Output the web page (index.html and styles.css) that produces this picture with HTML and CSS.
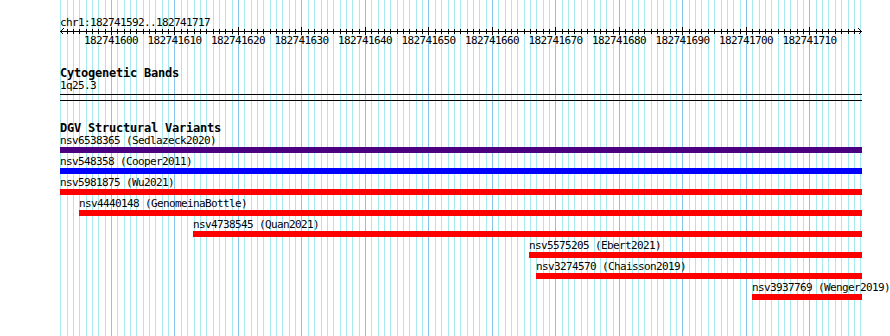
FILE: index.html
```html
<!DOCTYPE html>
<html>
<head>
<meta charset="utf-8">
<title>DGV Structural Variants</title>
<link rel="stylesheet" href="styles.css">
</head>
<body>
<div class="browser">
  <svg class="grid" id="grid" width="890" height="336" shape-rendering="crispEdges"></svg>
  <div class="panel">
    <svg class="ruler" id="ruler" width="890" height="46" shape-rendering="crispEdges">
      <text class="chr" x="60" y="26">chr1:182741592..182741717</text>
      <path class="axis" d="M60 31.5H861.5M60.5 31.5L63.5 28.5M60.5 31.5L63.5 34.5M861.5 31.5L858.5 28.5M861.5 31.5L858.5 34.5"/>
      <g class="tick-labels">
        <text x="111" y="44">182741600</text>
        <text x="174.5" y="44">182741610</text>
        <text x="238" y="44">182741620</text>
        <text x="301.5" y="44">182741630</text>
        <text x="365" y="44">182741640</text>
        <text x="428.5" y="44">182741650</text>
        <text x="492" y="44">182741660</text>
        <text x="555.5" y="44">182741670</text>
        <text x="619" y="44">182741680</text>
        <text x="682.5" y="44">182741690</text>
        <text x="746" y="44">182741700</text>
        <text x="809.5" y="44">182741710</text>
      </g>
    </svg>

    <section class="track track-cyto">
      <h2 class="track-title">Cytogenetic Bands</h2>
      <div class="band-label">1q25.3</div>
      <div class="band"></div>
    </section>

    <section class="track track-dgv">
      <h2 class="track-title">DGV Structural Variants</h2>
      <div class="feature" style="margin-left:60px;width:802px">
        <div class="feature-label">nsv6538365 (Sedlazeck2020)</div>
        <div class="feature-bar bar-indigo"></div>
      </div>
      <div class="feature" style="margin-left:60px;width:802px">
        <div class="feature-label">nsv548358 (Cooper2011)</div>
        <div class="feature-bar bar-blue"></div>
      </div>
      <div class="feature" style="margin-left:60px;width:802px">
        <div class="feature-label">nsv5981875 (Wu2021)</div>
        <div class="feature-bar bar-red"></div>
      </div>
      <div class="feature" style="margin-left:79px;width:783px">
        <div class="feature-label">nsv4440148 (GenomeinaBottle)</div>
        <div class="feature-bar bar-red"></div>
      </div>
      <div class="feature" style="margin-left:193px;width:669px">
        <div class="feature-label">nsv4738545 (Quan2021)</div>
        <div class="feature-bar bar-red"></div>
      </div>
      <div class="feature" style="margin-left:529px;width:333px">
        <div class="feature-label">nsv5575205 (Ebert2021)</div>
        <div class="feature-bar bar-red"></div>
      </div>
      <div class="feature" style="margin-left:536px;width:326px">
        <div class="feature-label">nsv3274570 (Chaisson2019)</div>
        <div class="feature-bar bar-red"></div>
      </div>
      <div class="feature" style="margin-left:752px;width:110px">
        <div class="feature-label">nsv3937769 (Wenger2019)</div>
        <div class="feature-bar bar-red"></div>
      </div>
    </section>
  </div>
</div>
<script src="grid.js"></script>
</body>
</html>
```

FILE: styles.css
```css
body {
  margin: 0;
  background: #ffffff;
}

.browser {
  position: relative;
  width: 890px;
  height: 336px;
  overflow: hidden;
  font-family: "DejaVu Sans Mono", monospace;
  color: #000000;
}

.grid {
  position: absolute;
  left: 0;
  top: 0;
}

.grid-minor {
  stroke: #a6e9ef;
  stroke-width: 1;
  fill: none;
}

.grid-major {
  stroke: #86c6ec;
  stroke-width: 1;
  fill: none;
}

.panel {
  position: relative;
}

.ruler {
  display: block;
}

.ruler text {
  font-family: "DejaVu Sans Mono", monospace;
  font-size: 11px;
  letter-spacing: -0.62px;
  fill: #000000;
}

.tick-labels text {
  text-anchor: middle;
}

.axis,
.ticks {
  stroke: #000000;
  stroke-width: 1;
  fill: none;
}

.track {
  margin: 0;
}

.track-title {
  margin: 0 0 0 60px;
  font-size: 12px;
  font-weight: bold;
  line-height: 13px;
  letter-spacing: -0.22px;
  white-space: nowrap;
}

.track-cyto {
  padding-top: 21px;
}

.band-label {
  margin-left: 60px;
  font-size: 11px;
  line-height: 12px;
  letter-spacing: -0.62px;
}

.band {
  margin: 2px 0 0 60px;
  width: 802px;
  height: 7px;
  box-sizing: border-box;
  border-top: 1px solid #000000;
  border-bottom: 1px solid #000000;
}

.track-dgv {
  padding-top: 21px;
}

.feature {
  margin-bottom: 3px;
}

.feature-label {
  font-size: 11px;
  line-height: 12px;
  letter-spacing: -0.62px;
  white-space: nowrap;
}

.feature-bar {
  height: 6px;
}

.bar-indigo {
  background: #4b0082;
}

.bar-blue {
  background: #0000ff;
}

.bar-red {
  background: #ff0000;
}
```

FILE: grid.js
```js
(function () {
  var NS = "http://www.w3.org/2000/svg";
  var start = 182741592;
  var left = 60.2;
  var scale = 800 / 126;
  var minor = "";
  var major = "";
  var minorTicks = "";
  var majorTicks = "";
  for (var i = 0; i <= 126; i++) {
    var x = Math.round(left + i * scale) + 0.5;
    var isMajor = (start + i) % 10 === 0;
    if (isMajor) {
      major += "M" + x + " 0V336";
    } else {
      minor += "M" + x + " 0V336";
    }
    if (i > 0 && i < 126) {
      if (isMajor) {
        majorTicks += "M" + x + " 27V35";
      } else {
        minorTicks += "M" + x + " 29V34";
      }
    }
  }
  function addPath(svg, d, cls) {
    var p = document.createElementNS(NS, "path");
    p.setAttribute("d", d);
    p.setAttribute("class", cls);
    svg.appendChild(p);
  }
  var grid = document.getElementById("grid");
  addPath(grid, minor, "grid-minor");
  addPath(grid, major, "grid-major");
  var ruler = document.getElementById("ruler");
  addPath(ruler, minorTicks + majorTicks, "ticks");
})();
```
